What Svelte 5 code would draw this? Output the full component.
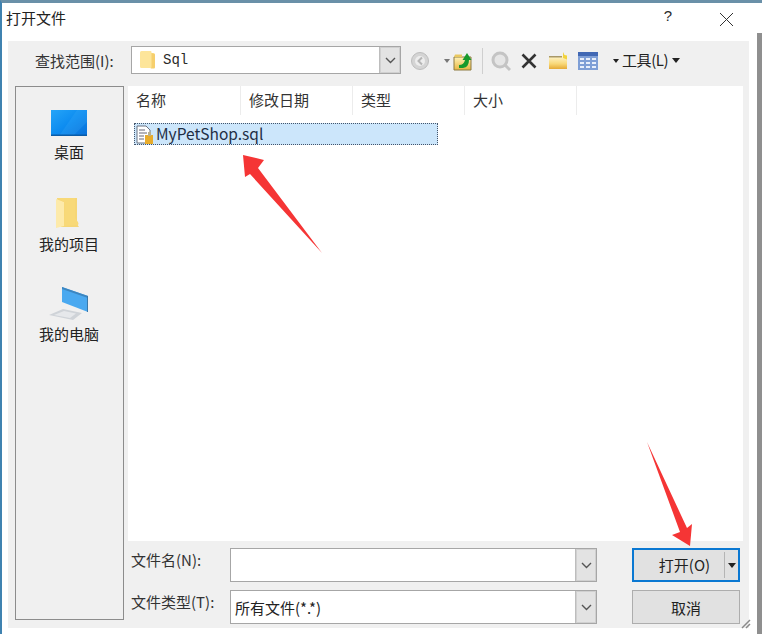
<script>
  const columns = [
    { name: '名称' },
    { name: '修改日期' },
    { name: '类型' },
    { name: '大小' }
  ];
</script>

{#snippet chevron()}
  <svg width="11" height="7" viewBox="0 0 11 7"><path d="M1 1l4.5 4.5L10 1" fill="none" stroke="#555" stroke-width="1.4"/></svg>
{/snippet}

{#snippet folderFlat()}
  <svg width="17" height="20" viewBox="0 0 17 20"><path d="M1 2.500q0-1.500 1.500-1.500h9q1 0 1 1v1h2q1.500 0 1.500 1.500v12q0 1.500-1.500 1.500h-12q-1.500 0-1.500-1.500z" fill="#fde59a"/><path d="M12.500 3v13.500q0 1.500-1 2h3.500q1 0 1-1.500v-12q0-1.500-1.500-1.500z" fill="#f6cf6d"/></svg>
{/snippet}

<div class="window">
  <header class="titlebar">
    <span class="title">打开文件</span>
    <span class="help">?</span>
    <svg class="close" width="15" height="15" viewBox="0 0 15 15"><path d="M1 1l13 13M14 1L1 14" stroke="#333" stroke-width="1" fill="none"/></svg>
  </header>

  <main class="panel">
    <div class="toolbar">
      <span class="look-label">查找范围(I):</span>
      <div class="combo look">
        <span class="combo-value">
          {@render folderFlat()}
          <span class="mono">Sql</span>
        </span>
        <span class="drop">{@render chevron()}</span>
      </div>
      <div class="tools">
        <svg class="t-back" width="20" height="20" viewBox="0 0 20 20"><circle cx="10" cy="10" r="8.500" fill="#d4d4d4" stroke="#bdbdbd"/><circle cx="10" cy="10" r="5" fill="#ededed"/><path d="M12 6.500L8.500 10l3.500 3.500" fill="none" stroke="#b5b5b5" stroke-width="2"/></svg>
        <span class="caret gray t-a"></span>
        <svg class="t-up" width="20" height="20" viewBox="0 0 20 20"><defs><linearGradient id="up" x1="0" y1="0" x2="0" y2="1"><stop offset="0" stop-color="#fff3b8"/><stop offset="1" stop-color="#e8b640"/></linearGradient></defs><path d="M1 6h17v13H1z" fill="url(#up)" stroke="#8c7a42"/><path d="M1 6h8V3.500H2z" fill="#e9c860"/><path d="M6 14q5 0 6-5H9.500L14 2l4.500 7H16q0 7-6 8H6z" fill="#189a2c"/></svg>
        <span class="sep"></span>
        <svg class="t-search" width="22" height="22" viewBox="0 0 22 22"><circle cx="10" cy="10" r="7" fill="#e6e6e6" stroke="#c4c4c4" stroke-width="3"/><path d="M15 15l5 5" stroke="#c4c4c4" stroke-width="3"/></svg>
        <svg class="t-x" width="16" height="16" viewBox="0 0 16 16"><path d="M1.500 1.500l13 13M14.500 1.500l-13 13" stroke="#333" stroke-width="2.600"/></svg>
        <svg class="t-new" width="20" height="18" viewBox="0 0 20 18"><defs><linearGradient id="nf" x1="0" y1="0" x2="0" y2="1"><stop offset="0" stop-color="#fff6cf"/><stop offset="0.600" stop-color="#f8d878"/><stop offset="1" stop-color="#e5aa36"/></linearGradient></defs><path d="M1 4h18v13H1z" fill="url(#nf)"/><path d="M1 4h13v1.500H1z" fill="#a89868"/><path d="M15 0l1.500 3 2.500.500v4L15 6z" fill="#f2d33d"/></svg>
        <svg class="t-view" width="20" height="18" viewBox="0 0 20 18"><path d="M0 0h20v18H0z" fill="#7f9fd6"/><path d="M0 0h20v4H0z" fill="#4168b4"/><path d="M2 6h4v2H2zM8 6h4v2H8zM14 6h4v2h-4zM2 10h4v2H2zM8 10h4v2H8zM14 10h4v2h-4zM2 14h4v2H2zM8 14h4v2H8zM14 14h4v2h-4z" fill="#e8effb"/></svg>
        <span class="caret dark t-b"></span>
        <span class="tools-label">工具(L)</span>
        <span class="caret black t-c"></span>
      </div>
    </div>

    <div class="body">
      <aside class="places">
        <div class="place">
          <svg width="36" height="26" viewBox="0 0 36 26"><defs><linearGradient id="desk" x1="0" y1="0" x2="1" y2="1"><stop offset="0" stop-color="#25a5f8"/><stop offset="0.500" stop-color="#0d8cf0"/><stop offset="1" stop-color="#0a70d8"/></linearGradient></defs><path d="M0 0h36v26H0z" fill="url(#desk)"/><path d="M8 26L26 0h10v12L22 26z" fill="#4bb5fa" opacity=".2"/><path d="M0 24.500h36V26H0z" fill="#0a5ca8"/></svg>
          <span>桌面</span>
        </div>
        <div class="place">
          <svg width="24" height="32" viewBox="0 0 24 32"><path d="M2 1h20v26l2 3H6z" fill="#f6d675"/><path d="M1 2l8 3v24l-8 2z" fill="#fdeaaa"/><path d="M9 5q1 6 0 24l14-1q1-1 0-3l-3-4V1H2z" fill="#f8d978"/></svg>
          <span>我的项目</span>
        </div>
        <div class="place computer">
          <svg width="40" height="34" viewBox="0 0 40 34"><path d="M13 0l26 9v16L13 15z" fill="#4aa9f0"/><path d="M13 0l26 9v2L13 2z" fill="#3d86c0"/><path d="M39 9v16h-1V9z" fill="#3a78a8"/><path d="M0 28l14-6 19 4-9 7z" fill="#cfd3d8"/><path d="M5 28l10-4 12 2.500-6 4.500z" fill="#e6e8eb"/></svg>
          <span>我的电脑</span>
        </div>
      </aside>

      <div class="content">
        <section class="list">
          <div class="list-head">
            {#each columns as col}
              <div class="col">{col.name}</div>
            {/each}
          </div>
          <div class="list-rows">
            <div class="file-row">
              <svg width="18" height="19" viewBox="0 0 18 19"><path d="M1 1h9l4 4v13H1z" fill="#fff" stroke="#6b7280"/><path d="M3 5h6M3 8h8M3 11h5M3 14h5" stroke="#667" stroke-width="1"/><path d="M9 10h8v9H9z" fill="#e8ac2c"/><path d="M12 7h3v4h-3z" fill="#b8b090"/></svg>
              <span>MyPetShop.sql</span>
            </div>
          </div>
        </section>

        <div class="form">
          <div class="fields">
            <div class="field-row">
              <span class="field-label">文件名(N):</span>
              <div class="combo field">
                <span class="combo-value"></span>
                <span class="drop">{@render chevron()}</span>
              </div>
            </div>
            <div class="field-row">
              <span class="field-label">文件类型(T):</span>
              <div class="combo field">
                <span class="combo-value text">所有文件(*.*)</span>
                <span class="drop">{@render chevron()}</span>
              </div>
            </div>
          </div>
          <div class="buttons">
            <div class="btn primary">
              <span class="btn-main">打开(O)</span>
              <span class="btn-split"><span class="caret black"></span></span>
            </div>
            <div class="btn">取消</div>
          </div>
        </div>
      </div>
    </div>
  </main>

  <svg class="grip" width="10" height="10" viewBox="0 0 10 10"><path d="M1 9l8-8M5 9l4-4" stroke="#8a8a8a" stroke-width="1.500"/></svg>

  <svg class="arrow" width="762" height="634" viewBox="0 0 762 634">
    <path d="M243 155L264 160 258 168 322 253 250 174 245 177z" fill="#f53535"/>
    <path d="M647 442L687 528 692 524 690 546 672 535 680 532z" fill="#f53535"/>
  </svg>
</div>

<style>
  :global(body) {
    margin: 0;
    background: #fff;
  }
  .window {
    position: relative;
    width: 762px;
    height: 634px;
    box-sizing: border-box;
    overflow: hidden;
    background: #fff;
    border-top: 3px solid #6a90a8;
    border-left: 2px solid #3f82b0;
    font-family: "Noto Sans CJK SC", "Noto Sans", sans-serif;
    font-size: 15px;
    color: #2a2a2a;
    display: flex;
    flex-direction: column;
  }
  .window::after {
    content: "";
    position: absolute;
    top: 30px;
    right: 0;
    bottom: 0;
    width: 5px;
    background: #8f8f8f;
  }
  .titlebar {
    flex: none;
    height: 38px;
    display: flex;
    align-items: center;
    padding: 0 28px 0 4px;
  }
  .title {
    font-size: 15px;
    color: #222;
    margin-top: -9px;
    flex: 1;
  }
  .help {
    font-family: "Liberation Sans", sans-serif;
    font-size: 15px;
    margin: -13px 47px 0 0;
  }
  .close {
    margin-top: -5px;
  }
  .panel {
    flex: 1;
    margin: 0 13px 6px 6px;
    background: #f0f0f0;
    display: flex;
    flex-direction: column;
    min-height: 0;
  }
  .toolbar {
    flex: none;
    height: 45px;
    display: flex;
    align-items: flex-start;
    padding-left: 27px;
  }
  .look-label {
    width: 96px;
    flex: none;
    margin-top: 10px;
    line-height: 20px;
    color: #333;
    white-space: nowrap;
  }
  .combo {
    display: flex;
    box-sizing: border-box;
    background: #fff;
    border: 1px solid #a6a6a6;
  }
  .look {
    width: 270px;
    height: 28px;
    margin-top: 5px;
  }
  .combo-value {
    flex: 1;
    display: flex;
    align-items: center;
    gap: 7px;
    padding-left: 7px;
  }
  .combo-value.text {
    padding-left: 4px;
    color: #222;
  }
  .mono {
    font-family: "Liberation Mono", monospace;
    font-size: 14px;
  }
  .drop {
    flex: none;
    width: 20px;
    display: flex;
    align-items: center;
    justify-content: center;
    background: #e3e3e3;
    border-left: 1px solid #bdbdbd;
    box-shadow: inset 0 0 0 1px #d0d0d0;
  }
  .tools {
    display: flex;
    align-items: center;
    height: 30px;
    margin-top: 5px;
    margin-left: 9px;
  }
  .t-a { margin-left: 14px; }
  .t-up { margin-left: 3px; }
  .sep {
    width: 1px;
    height: 26px;
    background: #cfcfcf;
    margin: 0 7px 0 9px;
  }
  .t-x { margin-left: 9px; }
  .t-new { margin-left: 11px; }
  .t-view { margin-left: 10px; }
  .t-b { margin-left: 15px; }
  .tools-label {
    margin: -3px 0 0 3px;
    font-size: 15px;
    letter-spacing: -0.4px;
    color: #222;
    white-space: nowrap;
  }
  .t-c { margin: -2px 0 0 4px; }
  .caret {
    display: inline-block;
    flex: none;
    width: 0;
    height: 0;
    border-left: 4px solid transparent;
    border-right: 4px solid transparent;
    border-top: 5px solid #222;
  }
  .caret.gray { border-top-color: #777; border-left-width: 3px; border-right-width: 3px; border-top-width: 4px; }
  .caret.dark { border-left-width: 3px; border-right-width: 3px; border-top-width: 4px; }
  .body {
    flex: 1;
    min-height: 0;
    display: flex;
    padding-left: 7px;
    padding-right: 6px;
  }
  .places {
    flex: none;
    width: 109px;
    height: 534px;
    box-sizing: border-box;
    border: 1.500px solid #8c8c8c;
    background: #f0f0f0;
    display: flex;
    flex-direction: column;
    padding-top: 23px;
  }
  .place {
    height: 91px;
    display: flex;
    flex-direction: column;
    align-items: center;
    color: #222;
    padding-right: 1px;
  }
  .place span {
    margin-top: 6px;
    line-height: 20px;
  }
  .place:nth-child(2) svg { margin: -4px 4px -1px 0; }
  .place.computer svg { margin-top: -5px; }
  .place.computer span { margin-top: 3px; }
  .content {
    flex: 1;
    min-width: 0;
    margin-left: 4px;
    display: flex;
    flex-direction: column;
  }
  .list {
    height: 455px;
    flex: none;
    background: #fff;
    display: flex;
    flex-direction: column;
  }
  .list-head {
    flex: none;
    display: flex;
    height: 29px;
  }
  .col {
    width: 112px;
    box-sizing: border-box;
    padding-left: 8px;
    line-height: 28px;
    border-right: 1px solid #ececec;
    color: #333;
  }
  .col:first-child { width: 113px; }
  .list-rows {
    padding: 8px 0 0 6px;
  }
  .file-row {
    width: 304px;
    height: 22px;
    box-sizing: border-box;
    background: #cce6fb;
    border: 1px dotted #44546a;
    display: flex;
    align-items: center;
    gap: 2px;
    font-size: 15.500px;
    line-height: 18px;
    color: #1f2f45;
    padding-left: 1px;
  }
  .file-row span { margin-top: -3px; }
  .form {
    flex: 1;
    display: flex;
    padding: 7px 0 0 3px;
  }
  .fields {
    flex: none;
    width: 466px;
    display: flex;
    flex-direction: column;
    gap: 8px;
  }
  .field-row {
    display: flex;
    height: 34px;
  }
  .field-label {
    width: 99px;
    flex: none;
    line-height: 24px;
    color: #333;
    white-space: nowrap;
  }
  .field {
    width: 367px;
    height: 34px;
  }
  .buttons {
    margin-left: 35px;
    width: 108px;
    display: flex;
    flex-direction: column;
    gap: 8px;
  }
  .btn {
    height: 34px;
    box-sizing: border-box;
    background: #e1e1e1;
    border: 1px solid #adadad;
    display: flex;
    align-items: center;
    justify-content: center;
    color: #222;
  }
  .btn.primary {
    border: 2px solid #0a78d2;
    justify-content: flex-start;
  }
  .btn-main {
    flex: 1;
    text-align: center;
    padding-left: 11px;
    border-right: 1px solid #b5b5b5;
    line-height: 26px;
    white-space: nowrap;
  }
  .btn-split {
    flex: none;
    width: 13px;
    display: flex;
    justify-content: center;
  }
  .grip {
    position: absolute;
    right: 11px;
    bottom: 5px;
  }
  .arrow {
    position: absolute;
    left: -2px;
    top: -3px;
    pointer-events: none;
  }
</style>
